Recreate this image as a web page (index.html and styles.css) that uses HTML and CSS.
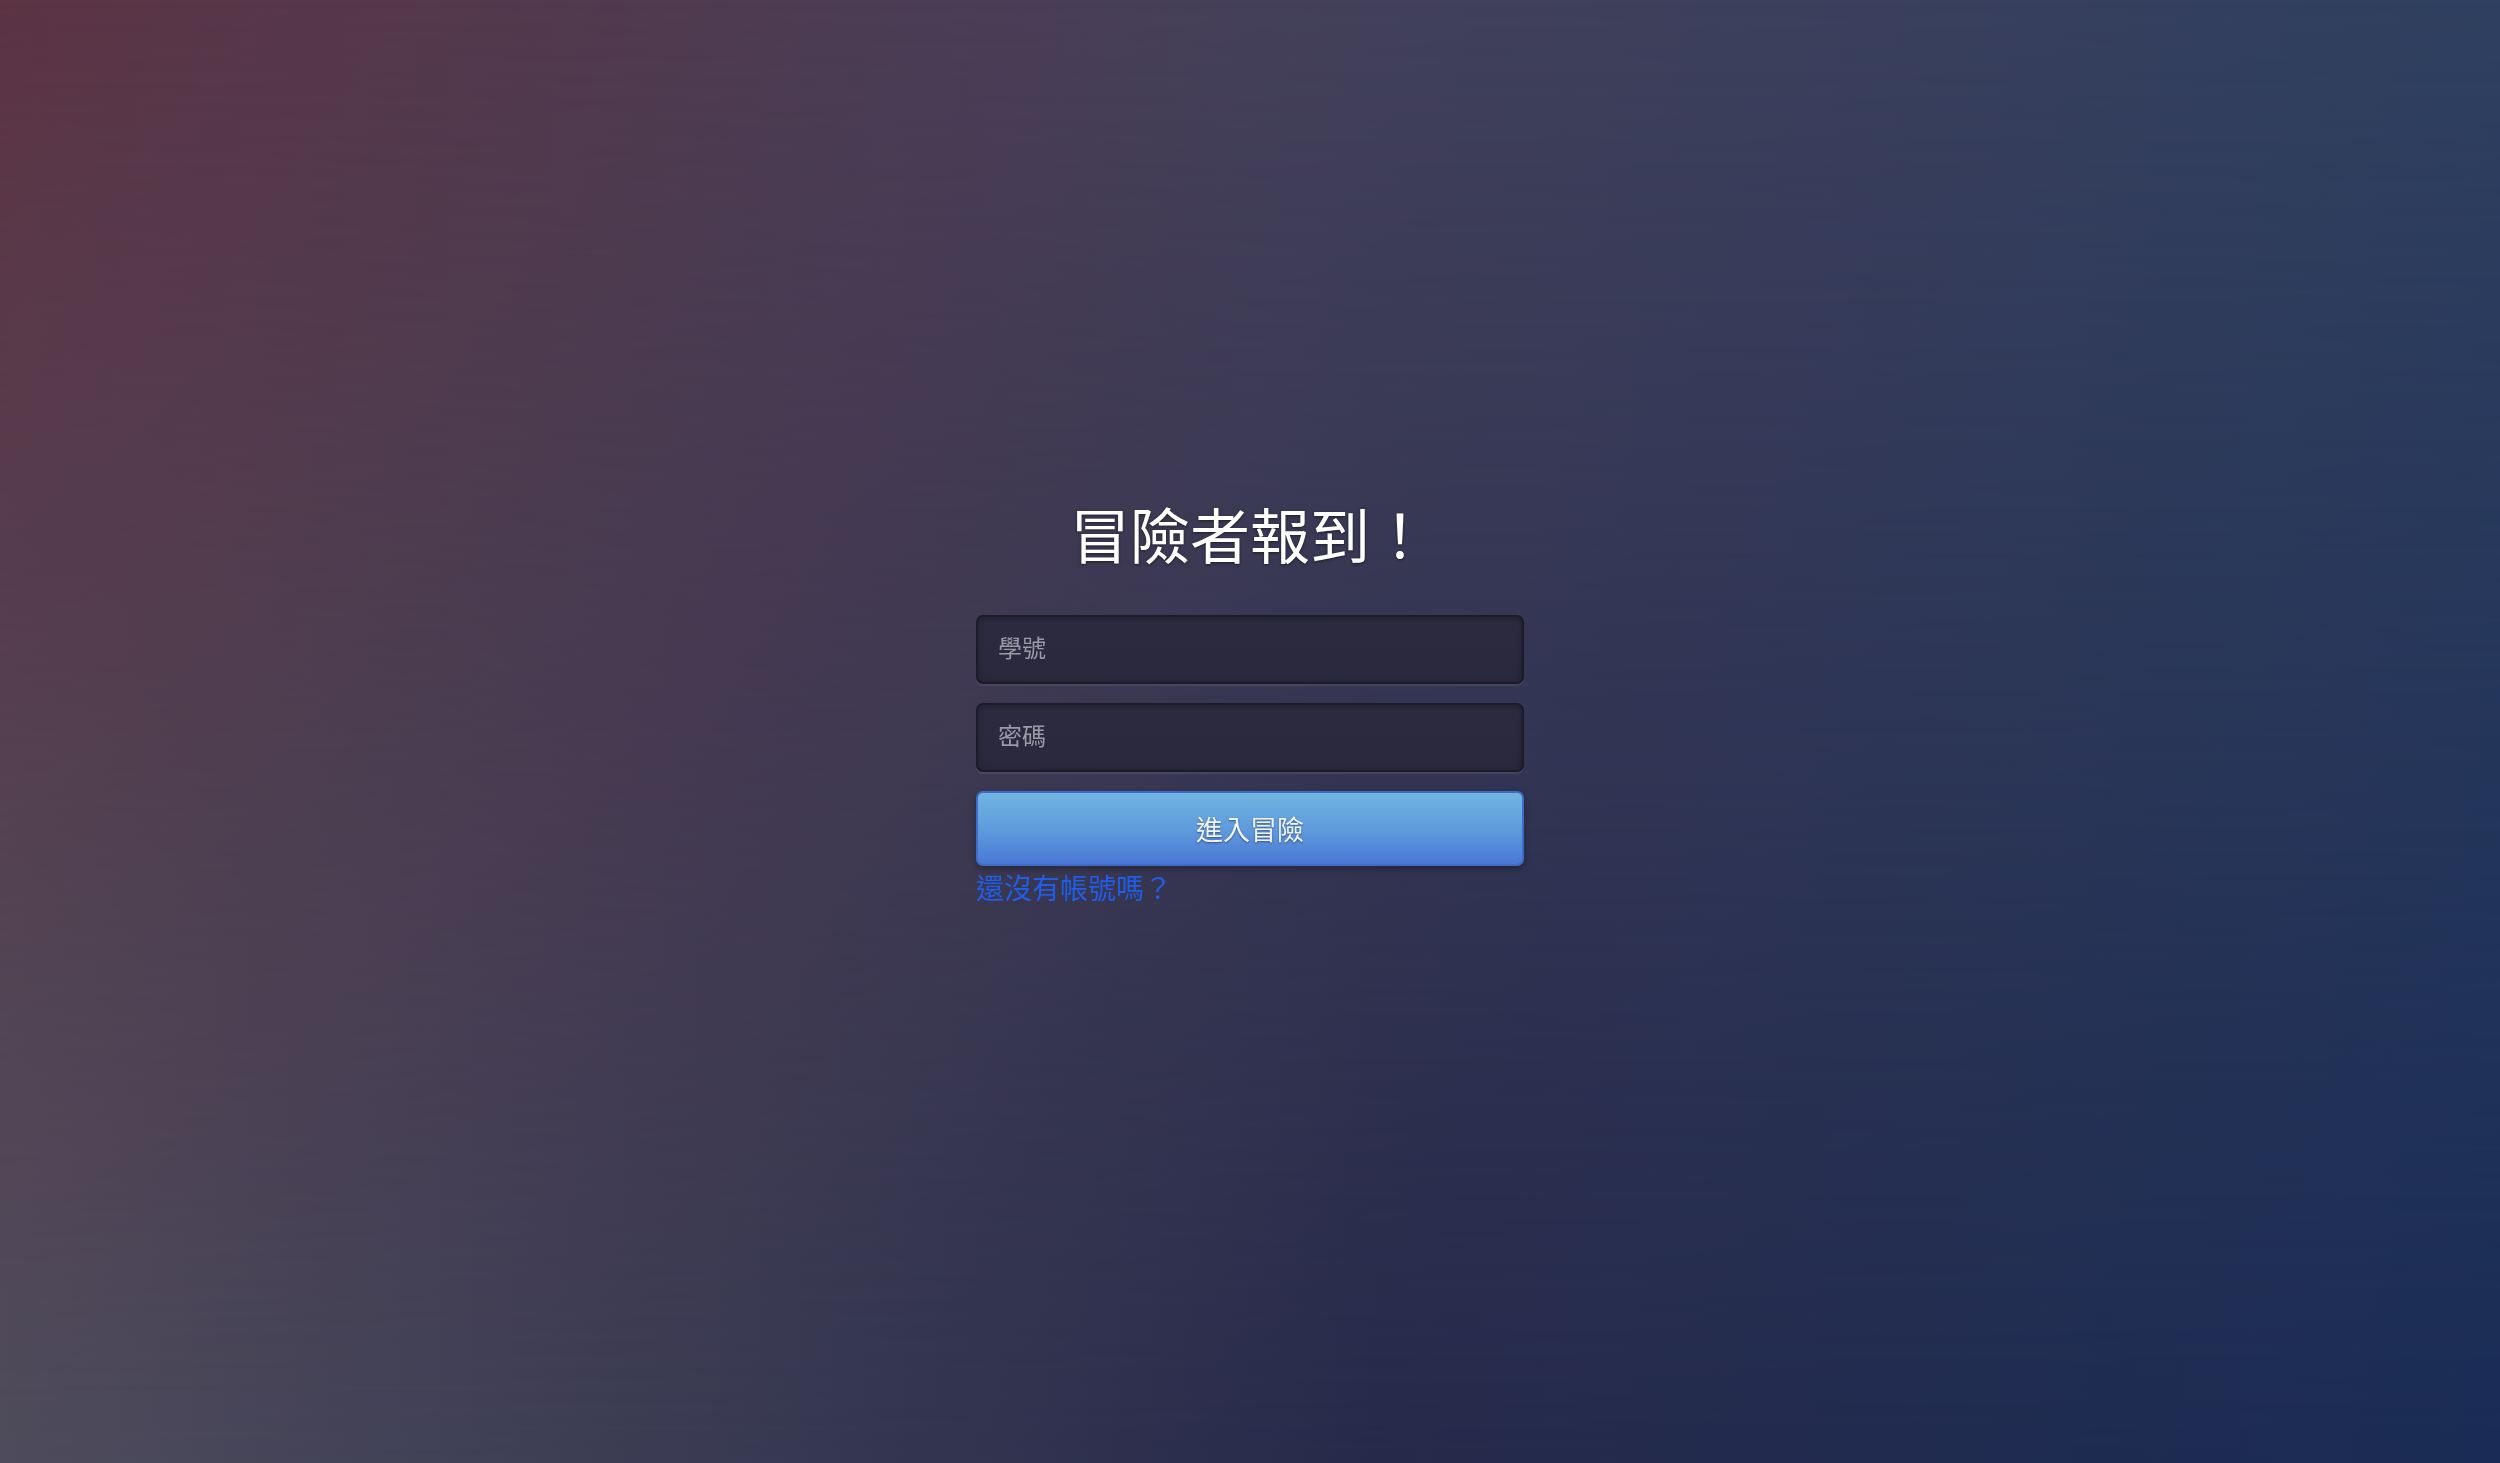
FILE: index.html
```html
<!DOCTYPE html>
<html lang="zh-Hant">
<head>
<meta charset="utf-8">
<title>冒險者報到</title>
<link rel="stylesheet" href="styles.css">
</head>
<body>
<main class="page">
  <section class="login">
    <h1 class="title">冒險者報到！</h1>
    <form class="form">
      <input class="field" type="text" placeholder="學號">
      <input class="field" type="password" placeholder="密碼">
      <button class="submit" type="button">進入冒險</button>
    </form>
    <a class="signup" href="#">還沒有帳號嗎？</a>
  </section>
</main>
</body>
</html>
```
FILE: styles.css
```css
html, body {
  margin: 0;
  padding: 0;
  height: 100%;
}
body {
  font-family: "Liberation Serif", "Noto Sans CJK TC", serif;
  background: linear-gradient(to right, #5c3444 0%, #45405a 50%, #2f4060 100%);
  position: relative;
  overflow: hidden;
}
body::before {
  content: "";
  position: fixed;
  inset: 0;
  background: linear-gradient(to right, #4e4c5c 0%, #262a4a 55%, #1a2c55 100%);
  -webkit-mask-image: linear-gradient(to bottom, transparent 0%, black 100%);
  mask-image: linear-gradient(to bottom, transparent 0%, black 100%);
}
.page {
  position: relative;
  height: 100%;
  display: flex;
  align-items: center;
  justify-content: center;
}
.login {
  width: 548px;
  display: flex;
  flex-direction: column;
  margin-top: -52px;
}
.title {
  margin: 0 0 40px;
  font-size: 60px;
  line-height: 72px;
  font-weight: 400;
  color: #ffffff;
  text-align: center;
  text-shadow: 0 1px 3px rgba(0, 0, 0, 0.5);
}
.form {
  display: flex;
  flex-direction: column;
  gap: 19px;
  margin: 0;
}
.field {
  box-sizing: border-box;
  height: 69px;
  width: 100%;
  padding: 0 20px;
  border: 2px solid #1c1b29;
  border-radius: 7px;
  background: linear-gradient(to bottom, #2c2b40, #29283c);
  box-shadow: 0 2px 0 rgba(255, 255, 255, 0.08), inset 0 2px 6px rgba(0, 0, 0, 0.25);
  color: #e0e0ea;
  font-family: "Liberation Serif", "Noto Sans CJK TC", serif;
  font-size: 24px;
  outline: none;
}
.field::placeholder {
  color: #9b9aa8;
}
.submit {
  box-sizing: border-box;
  height: 75px;
  width: 100%;
  border: 2px solid #3f6cc6;
  border-radius: 7px;
  background: linear-gradient(to bottom, #71b5e2 0%, #5f9bdc 50%, #4a78d6 100%);
  box-shadow: 0 3px 6px rgba(0, 0, 0, 0.3);
  color: #f2f4fb;
  font-family: "Liberation Serif", "Noto Sans CJK TC", serif;
  font-size: 27px;
  text-shadow: 0 1px 2px rgba(0, 0, 0, 0.45);
  cursor: pointer;
}
.signup {
  align-self: flex-start;
  margin-top: 6px;
  font-size: 28px;
  line-height: 36px;
  color: #1f5ee8;
  text-decoration: none;
}
```
